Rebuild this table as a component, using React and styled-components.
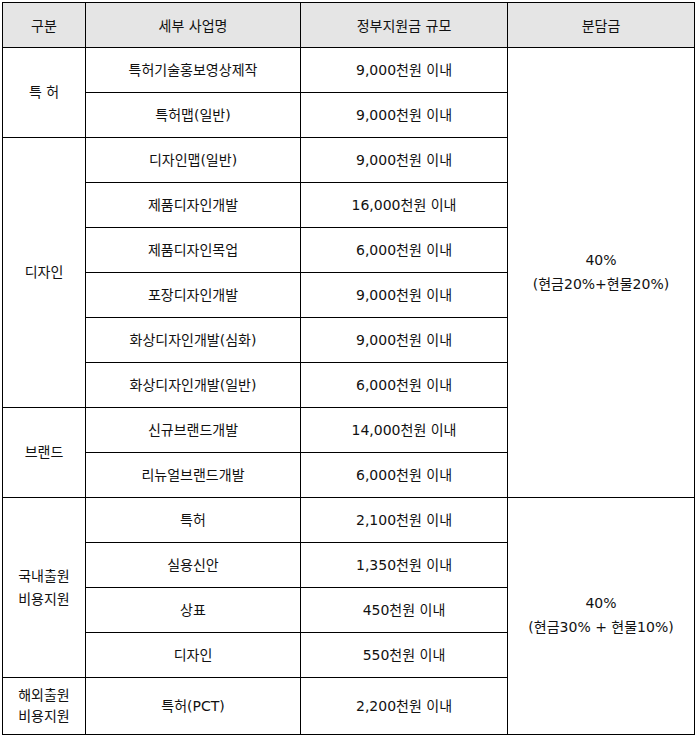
import React from "react";
import styled, { createGlobalStyle } from "styled-components";

const Global = createGlobalStyle`
  html, body { margin: 0; padding: 0; background: #fff; }
  body { font-family: "DejaVu Sans", "Noto Sans CJK KR", sans-serif; }
`;

const Wrap = styled.div`
  padding: 2px 0 0 2px;
`;

const Table = styled.table`
  border-collapse: collapse;
  table-layout: fixed;
  width: 692px;
  font-size: 14px;
  color: #111;
`;

const Col = styled.col`
  width: ${(p) => p.$w}px;
`;

const Head = styled.th`
  height: 44px;
  padding: 0;
  border: 1px solid #000;
  background: #e5e5e5;
  font-weight: 400;
  text-align: center;
  vertical-align: middle;
  color: #111;
`;

const Cell = styled.td`
  height: ${(p) => p.$h || 44}px;
  padding: 0;
  border: 1px solid #000;
  text-align: center;
  vertical-align: middle;
  line-height: ${(p) => p.$lh || 1.6};
`;

const groups = [
  { name: ["특 허"], rows: [["특허기술홍보영상제작", "9,000천원 이내"], ["특허맵(일반)", "9,000천원 이내"]] },
  {
    name: ["디자인"],
    rows: [
      ["디자인맵(일반)", "9,000천원 이내"],
      ["제품디자인개발", "16,000천원 이내"],
      ["제품디자인목업", "6,000천원 이내"],
      ["포장디자인개발", "9,000천원 이내"],
      ["화상디자인개발(심화)", "9,000천원 이내"],
      ["화상디자인개발(일반)", "6,000천원 이내"],
    ],
  },
  { name: ["브랜드"], rows: [["신규브랜드개발", "14,000천원 이내"], ["리뉴얼브랜드개발", "6,000천원 이내"]] },
  {
    name: ["국내출원", "비용지원"],
    rows: [
      ["특허", "2,100천원 이내"],
      ["실용신안", "1,350천원 이내"],
      ["상표", "450천원 이내"],
      ["디자인", "550천원 이내"],
    ],
  },
  { name: ["해외출원", "비용지원"], rows: [["특허(PCT)", "2,200천원 이내"]], h: 56, lh: 1.5 },
];

const shares = {
  0: { span: 10, lines: ["40%", "(현금20%+현물20%)"] },
  3: { span: 5, lines: ["40%", "(현금30% + 현물10%)"] },
};

function Lines({ lines }) {
  return lines.map((l, i) => (
    <React.Fragment key={i}>
      {i > 0 && <br />}
      {l}
    </React.Fragment>
  ));
}

export default function App() {
  const body = [];
  groups.forEach((g, gi) => {
    g.rows.forEach((r, ri) => {
      const share = ri === 0 ? shares[gi] : null;
      body.push(
        <tr key={`${gi}-${ri}`}>
          {ri === 0 && (
            <Cell rowSpan={g.rows.length} $lh={g.lh || 1.6}>
              <Lines lines={g.name} />
            </Cell>
          )}
          <Cell $h={g.h}>{r[0]}</Cell>
          <Cell $h={g.h}>{r[1]}</Cell>
          {share && (
            <Cell rowSpan={share.span} $lh={1.7}>
              <Lines lines={share.lines} />
            </Cell>
          )}
        </tr>
      );
    });
  });

  return (
    <>
      <Global />
      <Wrap>
        <Table>
          <colgroup>
            <Col $w={83} />
            <Col $w={215} />
            <Col $w={207} />
            <Col $w={187} />
          </colgroup>
          <thead>
            <tr>
              <Head>구분</Head>
              <Head>세부 사업명</Head>
              <Head>정부지원금 규모</Head>
              <Head>분담금</Head>
            </tr>
          </thead>
          <tbody>{body}</tbody>
        </Table>
      </Wrap>
    </>
  );
}
